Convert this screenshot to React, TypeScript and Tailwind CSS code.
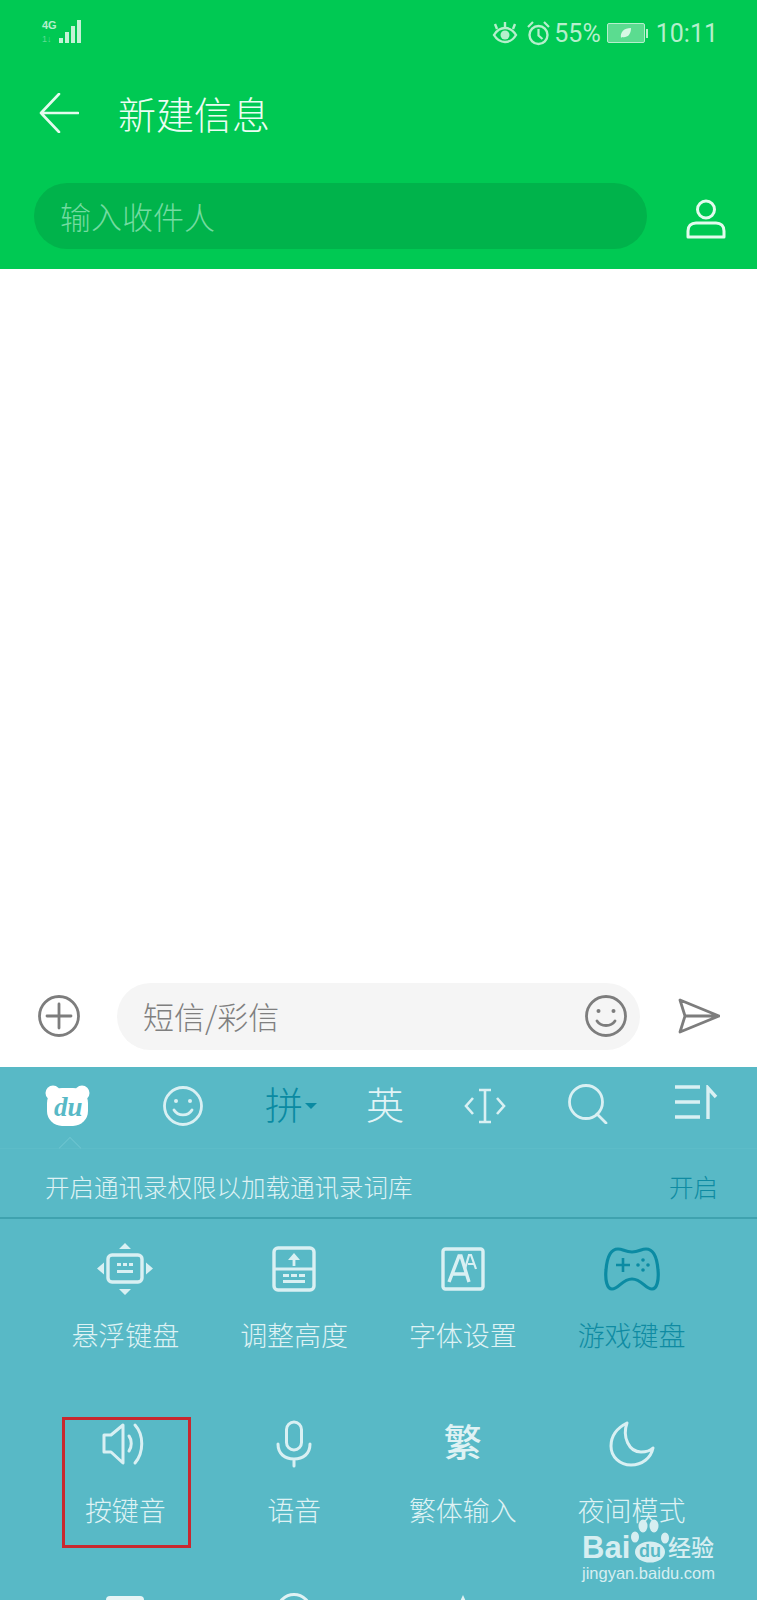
import React from "react";

const cjk = "font-['Noto_Sans_CJK_SC','Noto_Sans',sans-serif]";

function Stat({ children, w, h }: { children: React.ReactNode; w: number; h: number }) {
  return <svg width={w} height={h} viewBox={`0 0 ${w} ${h}`} fill="none">{children}</svg>;
}

function StatusBar() {
  return (
    <div className="flex h-[55px] items-start justify-between pl-[40px] pr-[39px] pt-[17px] text-[#b5efcc]">
      <svg width="42" height="28" viewBox="0 0 42 28" fill="none">
        <text x="2" y="12" fontSize="11" fontWeight="700" fill="#b5efcc" fontFamily="Liberation Sans">4G</text>
        <text x="2" y="25" fontSize="9" fill="#5fdc94" fontFamily="Liberation Sans">1↓</text>
        <rect x="19" y="21" width="4" height="5" fill="#c4f2d6" />
        <rect x="25" y="15" width="4" height="11" fill="#c4f2d6" />
        <rect x="31" y="9" width="4" height="17" fill="#c4f2d6" />
        <rect x="37" y="3" width="4" height="23" fill="#c4f2d6" />
      </svg>
      <div className="flex items-center pt-[3px]">
        <Stat w={26} h={24}>
          <path d="M2 14c3-5 7-7 11-7s8 2 11 7c-3 5-7 7-11 7s-8-2-11-7z" stroke="#b5efcc" strokeWidth="2.4" />
          <circle cx="13" cy="14" r="4.500" fill="#b5efcc" />
          <path d="M5 8 3 3M13 6V1M21 8l2-5" stroke="#b5efcc" strokeWidth="2.4" />
        </Stat>
        <div className="ml-[8px]">
          <Stat w={25} h={26}>
            <circle cx="12.500" cy="15" r="9" stroke="#b5efcc" strokeWidth="2.400" />
            <path d="M12.500 9v6.500l4 3.500M2 7l5-5M23 7l-5-5" stroke="#b5efcc" strokeWidth="2.200" />
          </Stat>
        </div>
        <span className="ml-[3px] font-['Roboto',sans-serif] text-[25px] font-normal leading-none">55%</span>
        <div className="ml-[6px] flex items-center">
          <div className="flex h-[20px] w-[38px] items-center justify-center rounded-[2px] border border-[#b5efcc] bg-[#5bdc90]">
            <svg width="13" height="12" viewBox="0 0 13 12">
              <path d="M2 11C1 5 5 1 12 1c0 7-4 10-9 9z" fill="#d8f8e4" />
            </svg>
          </div>
          <div className="ml-[1px] h-[9px] w-[2px] bg-[#b5efcc]" />
        </div>
        <span className="ml-[8px] font-['Roboto',sans-serif] text-[25px] font-normal leading-none">10:11</span>
      </div>
    </div>
  );
}

function Header() {
  return (
    <header className="h-[269px] shrink-0 bg-[#00c953]">
      <StatusBar />
      <div className="flex h-[120px] items-center pb-[4px] pl-[39px]">
        <svg width="40" height="40" viewBox="0 0 40 40" fill="none">
          <path d="M20 1 2 20l18 19M2 20h37" stroke="#e4fbee" strokeWidth="2.6" strokeLinecap="round" strokeLinejoin="round" />
        </svg>
        <h1 className={`ml-[39px] text-[38px] font-light leading-none text-[#ecfdf3] ${cjk}`}>新建信息</h1>
      </div>
      <div className="flex items-center pl-[34px] pt-[8px]">
        <div className={`flex h-[66px] w-[613px] items-center rounded-full bg-[#00b34b] pl-[26px] text-[31px] font-light text-[#72dba0] ${cjk}`}>
          输入收件人
        </div>
        <svg className="ml-[39px] mt-[6px]" width="40" height="40" viewBox="0 0 40 40" fill="none">
          <circle cx="20" cy="10.500" r="8.500" stroke="#e4fbee" strokeWidth="3" />
          <path d="M2 38v-6c0-5 3-8 8-8h20c5 0 8 3 8 8v6z" stroke="#e4fbee" strokeWidth="3" strokeLinejoin="round" />
        </svg>
      </div>
    </header>
  );
}

function Composer() {
  return (
    <div className="flex h-[100px] shrink-0 items-center bg-white pb-[2px] pl-[38px]">
      <svg width="42" height="42" viewBox="0 0 42 42" fill="none" stroke="#7d7d7d" strokeWidth="2.800" strokeLinecap="round">
        <circle cx="21" cy="21" r="19.500" />
        <path d="M21 9v24M9 21h24" />
      </svg>
      <div className={`ml-[37px] flex h-[67px] w-[523px] items-center justify-between rounded-full bg-[#f5f5f5] pl-[26px] pr-[13px] text-[31px] font-light text-[#7f7f7f] ${cjk}`}>
        <span>短信/彩信</span>
        <svg width="42" height="42" viewBox="0 0 42 42" fill="none" stroke="#7d7d7d" strokeWidth="2.800" strokeLinecap="round">
          <circle cx="21" cy="21" r="19.500" />
          <circle cx="13.500" cy="16" r="2" fill="#7d7d7d" stroke="none" />
          <circle cx="28.500" cy="16" r="2" fill="#7d7d7d" stroke="none" />
          <path d="M12 26c4 6 14 6 18 0" />
        </svg>
      </div>
      <svg className="ml-[38px]" width="42" height="36" viewBox="0 0 42 36" fill="none" stroke="#7d7d7d" strokeWidth="2.800" strokeLinejoin="round" strokeLinecap="round">
        <path d="M2 2 41 18 2 34l5-16zM7 18h34" />
      </svg>
    </div>
  );
}

const ice = "#d9f0f3";
const teal = "#0b8ba3";

function ToolBar() {
  return (
    <div className="relative h-[82px] shrink-0 border-b border-[#5dbcc8]">
      <div className={`flex h-[66px] items-center pl-[45px] pt-[11px] text-[38px] font-light leading-none text-[#e2f4f6] ${cjk}`}>
        <svg width="45" height="42" viewBox="0 0 45 42">
          <circle cx="8" cy="8" r="7.500" fill="#fff" />
          <circle cx="37" cy="8" r="7.500" fill="#fff" />
          <rect x="2" y="3" width="41" height="38" rx="15" fill="#fff" />
          <text x="9" y="31" fontSize="27" fontStyle="italic" fontWeight="700" fill="#58b9c6" fontFamily="Liberation Serif">du</text>
        </svg>
        <svg className="ml-[73px]" width="40" height="40" viewBox="0 0 40 40" fill="none" stroke={ice} strokeWidth="2.800" strokeLinecap="round">
          <circle cx="20" cy="20" r="18.500" />
          <circle cx="13" cy="15" r="2" fill={ice} stroke="none" />
          <circle cx="27" cy="15" r="2" fill={ice} stroke="none" />
          <path d="M11 24c4 6.500 14 6.500 18 0" />
        </svg>
        <span className="-mt-[6px] ml-[62px] text-[#0a8aa2]">拼</span>
        <span className="ml-[2px] h-0 w-0 border-x-[6px] border-t-[6px] border-x-transparent border-t-[#0a8aa2]" />
        <span className="-mt-[6px] ml-[49px]">英</span>
        <svg className="ml-[60px]" width="42" height="36" viewBox="0 0 42 36" fill="none" stroke={ice} strokeWidth="2.600">
          <path d="M9 10 2 18l7 8M33 10l7 8-7 8M15 2h12M21 2v32M15 34h12" />
        </svg>
        <svg className="-mt-[4px] ml-[62px]" width="40" height="40" viewBox="0 0 40 40" fill="none" stroke={ice} strokeWidth="2.800" strokeLinecap="round">
          <circle cx="18" cy="18" r="16.500" />
          <path d="M29 30l9 9" />
        </svg>
        <svg className="-mt-[6px] ml-[67px]" width="43" height="36" viewBox="0 0 43 36" fill="none" stroke={ice} strokeWidth="3.400">
          <path d="M0 2h25M0 17h25M0 32h25M33 34V3l8 9" />
        </svg>
      </div>
      <div className="absolute left-[62px] top-[73px] h-[16px] w-[16px] rotate-45 border-l border-t border-[#6cc4cf]" />
    </div>
  );
}

function Tip() {
  return (
    <div className={`flex h-[70px] shrink-0 items-center justify-between border-b-2 border-[#3fa2af] pl-[45px] pr-[39px] pt-[8px] text-[24.500px] font-light leading-none ${cjk}`}>
      <span className="text-[#def2f4]">开启通讯录权限以加载通讯录词库</span>
      <span className="text-[#0f8ba2]">开启</span>
    </div>
  );
}

function Float() {
  return (
    <svg width="56" height="52" viewBox="0 0 56 52" fill={ice}>
      <rect x="11" y="12" width="34" height="27" rx="4" fill="none" stroke={ice} strokeWidth="3.400" />
      <path d="M20 20h4v3h-4zM26 20h4v3h-4zM32 20h4v3h-4zM20 27h16v3H20zM28 0l6 6H22zM28 52l-6-6h12zM0 25.500l7-6v12zM56 25.500l-7-6v12z" />
    </svg>
  );
}
function Height() {
  return (
    <svg width="44" height="46" viewBox="0 0 44 46" fill="none" stroke={ice}>
      <rect x="2" y="2" width="40" height="42" rx="4" strokeWidth="3.400" />
      <path d="M2 23h40M22 20V9" strokeWidth="2.800" />
      <path d="M16 14l6-7 6 7z" fill={ice} stroke="none" />
      <path d="M11 28h6v3h-6zM19 28h6v3h-6zM27 28h6v3h-6zM11 34h22v3H11z" fill={ice} stroke="none" />
    </svg>
  );
}
function FontIcon() {
  return (
    <svg width="44" height="44" viewBox="0 0 44 44" fill="none" stroke={ice}>
      <rect x="2" y="2" width="40" height="40" rx="2.500" strokeWidth="3.400" />
      <path d="M8 35 18 9h2l8 26M11.500 27h13" strokeWidth="3.400" />
      <path d="M24 22l4-14h2l5 14M27 17h6" strokeWidth="2.200" />
    </svg>
  );
}
function Pad() {
  return (
    <svg width="56" height="44" viewBox="0 0 56 44" fill="none" stroke={teal} strokeWidth="3.200" strokeLinejoin="round">
      <path d="M14 2c5 0 7 3 14 3s9-3 14-3c7 0 11 8 12 21 1 10-1 19-6 19-7 0-10-10-20-10S15 42 8 42C3 42 1 33 2 23 3 10 7 2 14 2z" />
      <path d="M12 18h14M19 11v14" strokeWidth="2.600" />
      <circle cx="39" cy="13" r="1.800" fill={teal} stroke="none" />
      <circle cx="39" cy="23" r="1.800" fill={teal} stroke="none" />
      <circle cx="34" cy="18" r="1.800" fill={teal} stroke="none" />
      <circle cx="44" cy="18" r="1.800" fill={teal} stroke="none" />
    </svg>
  );
}
function Speaker() {
  return (
    <svg width="46" height="44" viewBox="0 0 46 44" fill="none" stroke={ice} strokeWidth="3">
      <path d="M21 3 9 13H2v17h7l12 11z" strokeLinejoin="round" />
      <path d="M27 14c3 4 3 11 0 15M33 3c9 10 9 27 0 38" strokeLinecap="round" />
    </svg>
  );
}
function Mic() {
  return (
    <svg width="36" height="48" viewBox="0 0 36 48" fill="none" stroke={ice} strokeWidth="3" strokeLinecap="round">
      <rect x="10.500" y="2" width="15" height="28" rx="7.500" />
      <path d="M2 24c0 10 7 15 16 15s16-5 16-15M18 39v7" />
    </svg>
  );
}
function Moon() {
  return (
    <svg width="46" height="46" viewBox="0 0 46 46" fill="none" stroke={ice} strokeWidth="3" strokeLinejoin="round">
      <path d="M18 2C8 7 2 14 2 25c0 11 9 19 20 19 11 0 20-7 22-17-3 3-8 4-12 4C20 31 13 16 18 2z" />
    </svg>
  );
}

function Cell({ icon, label, active }: { icon: React.ReactNode; label?: string; active?: boolean }) {
  return (
    <div className="flex h-[175px] flex-col items-center">
      <div className="flex h-[52px] items-center justify-center">{icon}</div>
      {label ? (
        <span className={`mt-[24px] text-[27px] font-light leading-[32px] ${active ? "text-[#0f8ba2]" : "text-[#def2f4]"} ${cjk}`}>
          {label}
        </span>
      ) : null}
    </div>
  );
}

function Grid() {
  return (
    <div className="grid grid-cols-4 px-[41px] pt-[24px]">
      <Cell icon={<Float />} label="悬浮键盘" />
      <Cell icon={<Height />} label="调整高度" />
      <Cell icon={<FontIcon />} label="字体设置" />
      <Cell icon={<Pad />} label="游戏键盘" active />
      <Cell icon={<Speaker />} label="按键音" />
      <Cell icon={<Mic />} label="语音" />
      <Cell icon={<span className={`-mt-[8px] text-[38px] font-medium leading-none text-[#dff2f4] ${cjk}`}>繁</span>} label="繁体输入" />
      <Cell icon={<Moon />} label="夜间模式" />
      <Cell icon={<div className="-mt-[6px] h-[40px] w-[38px] rounded-[4px] bg-[#e6f5f6]" />} />
      <Cell icon={<div className="-mt-[12px] h-[40px] w-[36px] rounded-full border-[3px] border-[#dff2f4]" />} />
      <Cell icon={<svg className="-mt-[10px]" width="44" height="40" viewBox="0 0 44 40"><path d="M22 1l6 13 14 2-10 10 2 14-12-7-12 7 2-14L2 16l14-2z" fill="#dff2f4" /></svg>} />
    </div>
  );
}

function Watermark() {
  return (
    <div className="absolute left-[582px] top-[1518px] h-[76px] w-[138px] text-[#d6eef1]">
      <span className="absolute left-0 top-[14px] font-['Liberation_Sans',sans-serif] text-[31px] font-bold leading-none">Bai</span>
      <svg className="absolute left-[48px] top-0" width="42" height="46" viewBox="0 0 42 46" fill="#d6eef1">
        <ellipse cx="5" cy="19" rx="4" ry="5.500" />
        <ellipse cx="13" cy="8" rx="4.500" ry="6.500" />
        <ellipse cx="24" cy="8" rx="4.500" ry="6.500" />
        <ellipse cx="35" cy="20" rx="4" ry="5.500" />
        <ellipse cx="20" cy="34" rx="15" ry="10.500" />
      </svg>
      <span className="absolute left-[57px] top-[24px] font-['Liberation_Sans',sans-serif] text-[18px] font-bold leading-none text-[#58b9c6]">du</span>
      <span className={`absolute left-[86px] top-[17px] whitespace-nowrap text-[23px] font-medium leading-none ${cjk}`}>经验</span>
      <span className="absolute left-0 top-[47px] whitespace-nowrap font-['Liberation_Sans',sans-serif] text-[16.500px] leading-none">jingyan.baidu.com</span>
    </div>
  );
}

export default function App() {
  return (
    <div className="relative flex h-[1600px] w-[757px] flex-col overflow-hidden bg-white">
      <Header />
      <main className="flex-1 bg-white" />
      <Composer />
      <section className="h-[533px] shrink-0 bg-[#58b9c6]">
        <ToolBar />
        <Tip />
        <Grid />
      </section>
      <div className="absolute left-[62px] top-[1417px] h-[131px] w-[129px] border-[3px] border-[#c8282f]" />
      <Watermark />
    </div>
  );
}
